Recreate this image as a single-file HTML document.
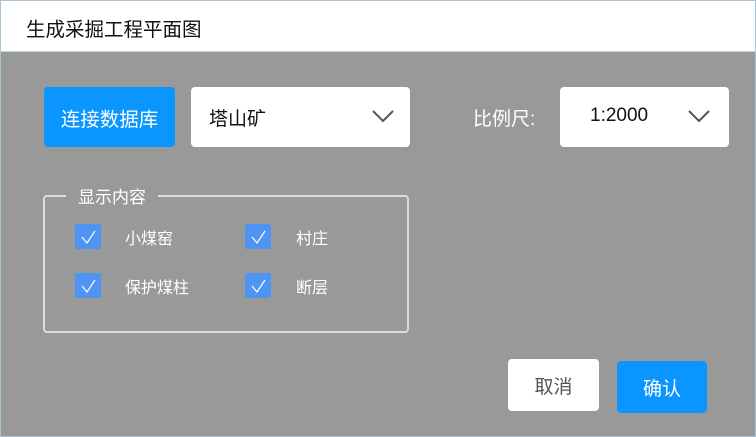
<!DOCTYPE html>
<html><head><meta charset="utf-8"><style>
*{margin:0;padding:0;box-sizing:border-box}
body{width:756px;height:437px;overflow:hidden;background:#999;font-family:"Liberation Sans","Noto Sans CJK SC",sans-serif;position:relative}
.frame{position:absolute;left:0;top:0;width:756px;height:437px;border:1px solid #a9c4d6}
.hdr{position:absolute;left:0;top:0;width:756px;height:52px;background:#fff;border:1px solid #a9c4d6;border-bottom:1px solid #c8d2da}
.hdr span{position:absolute;left:25px;top:12px;font-size:19.5px;color:#111}
.a{position:absolute}
.btn{display:flex;align-items:center;justify-content:center;border-radius:4px;font-size:19px}
.blue{background:#0a95ff;color:#fff}
.white{background:#fff;color:#222}
.cb{position:absolute;width:26px;height:25px;background:#4d94f3;border-radius:2px}
.lbl{position:absolute;color:#fff;font-size:16px}
</style></head><body>
<div class="frame"></div>
<div class="hdr"><span>生成采掘工程平面图</span></div>
<div class="a btn blue" style="left:44px;top:87px;width:131px;height:60px;font-size:19.5px">连接数据库</div>
<div class="a white" style="left:191px;top:87px;width:219px;height:60px;border-radius:4px;">
 <span style="position:absolute;left:18px;top:17px;font-size:19px;color:#111">塔山矿</span>
 <svg style="position:absolute;left:181px;top:22px" width="22" height="14"><path d="M1 2 L11 12 L21 2" fill="none" stroke="#555" stroke-width="2"/></svg>
</div>
<div class="lbl" style="left:473px;top:104px;font-size:19px">比例尺:</div>
<div class="a white" style="left:560px;top:87px;width:169px;height:60px;border-radius:4px;">
 <span style="position:absolute;left:30px;top:18px;font-size:19px;color:#111">1:2000</span>
 <svg style="position:absolute;left:128px;top:22px" width="22" height="14"><path d="M1 2 L11 12 L21 2" fill="none" stroke="#555" stroke-width="2"/></svg>
</div>
<div class="a" style="left:43px;top:195px;width:366px;height:138px;border:2px solid #ddd;border-radius:4px"></div>
<div class="lbl" style="left:66px;top:183px;background:#999;padding:0 12px;font-size:17px">显示内容</div>
<div class="cb" style="left:75px;top:224px"></div>
<div class="cb" style="left:245px;top:224px"></div>
<div class="cb" style="left:75px;top:273px"></div>
<div class="cb" style="left:245px;top:273px"></div>
<svg class="a" style="left:0;top:0" width="756" height="437">
<g fill="none" stroke="#fff" stroke-width="1.2">
<path d="M82 237 L87 243 L95 231"/><path d="M252 237 L257 243 L265 231"/>
<path d="M82 286 L87 292 L95 280"/><path d="M252 286 L257 292 L265 280"/>
</g></svg>
<div class="lbl" style="left:125px;top:225px">小煤窑</div>
<div class="lbl" style="left:296px;top:225px">村庄</div>
<div class="lbl" style="left:125px;top:274px">保护煤柱</div>
<div class="lbl" style="left:296px;top:274px">断层</div>
<div class="a btn white" style="left:508px;top:359px;width:91px;height:52px;color:#555">取消</div>
<div class="a btn blue" style="left:617px;top:361px;width:90px;height:52px;">确认</div>
</body></html>
